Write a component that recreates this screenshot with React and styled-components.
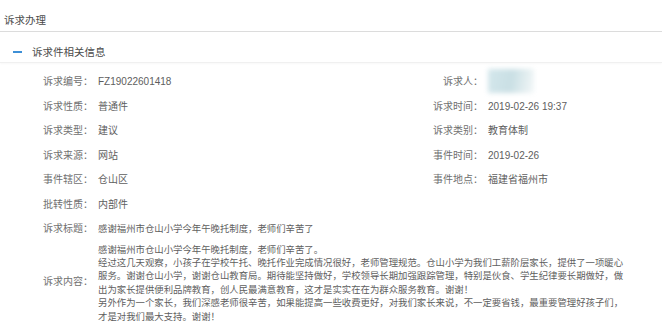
import React from 'react';
import styled, { createGlobalStyle } from 'styled-components';

const GlobalStyle = createGlobalStyle`
    body {
        margin: 0;
        background: #fff;
        font-family: "Liberation Sans", "Noto Sans CJK SC", sans-serif;
    }
`;

const fields = [
    { label: '诉求编号：', value: 'FZ19022601418', label2: '诉求人：', redacted: true },
    { label: '诉求性质：', value: '普通件', label2: '诉求时间：', value2: '2019-02-26 19:37' },
    { label: '诉求类型：', value: '建议', label2: '诉求类别：', value2: '教育体制' },
    { label: '诉求来源：', value: '网站', label2: '事件时间：', value2: '2019-02-26' },
    { label: '事件辖区：', value: '仓山区', label2: '事件地点：', value2: '福建省福州市' },
    { label: '批转性质：', value: '内部件', wide: true },
    { label: '诉求标题：', value: '感谢福州市仓山小学今年午晚托制度，老师们辛苦了', wide: true, small: true }
];

const contentLines = [
    '感谢福州市仓山小学今年午晚托制度，老师们辛苦了。',
    '经过这几天观察，小孩子在学校午托、晚托作业完成情况很好，老师管理规范。仓山小学为我们工薪阶层家长，提供了一项暖心',
    '服务。谢谢仓山小学，谢谢仓山教育局。期待能坚持做好，学校领导长期加强跟踪管理，特别是伙食、学生纪律要长期做好，做',
    '出为家长提供便利品牌教育，创人民最满意教育，这才是实实在在为群众服务教育。谢谢！',
    '另外作为一个家长，我们深感老师很辛苦，如果能提高一些收费更好，对我们家长来说，不一定要省钱，最重要管理好孩子们，',
    '才是对我们最大支持。谢谢！'
];

export default function App() {
    return <Page>
        <GlobalStyle />
        <PageTitle>诉求办理</PageTitle>
        <SectionHeader>
            <Dash />
            <span>诉求件相关信息</span>
        </SectionHeader>
        <InfoGrid>
            {fields.map((f, idx) => <React.Fragment key={idx}>
                <Label>{f.label}</Label>
                <Value $wide={f.wide} $small={f.small}>{f.value}</Value>
                {!f.wide && <Label>{f.label2}</Label>}
                {!f.wide && <Value>{f.redacted ? <Redacted /> : f.value2}</Value>}
            </React.Fragment>)}
            <Label $center>诉求内容：</Label>
            <Content>
                {contentLines.map((line, idx) => <Line key={idx}>{line}</Line>)}
            </Content>
        </InfoGrid>
    </Page>;
}

const Page = styled.div`
    width: 662px;
    height: 329px;
    overflow: hidden;
    background: #fff;
`;

const PageTitle = styled.div`
    height: 32px;
    line-height: 41px;
    padding-left: 4px;
    font-size: 10.5px;
    color: #4a4a4a;
    border-bottom: 1px solid #dcdcdc;
    box-sizing: border-box;
`;

const SectionHeader = styled.div`
    display: flex;
    align-items: center;
    gap: 10px;
    height: 31px;
    padding: 9px 0 0 13px;
    box-sizing: border-box;
    font-size: 10.5px;
    color: #4a4a4a;
    border-bottom: 1px solid #f0f0f0;
    box-shadow: 0 1px 2px rgba(0, 0, 0, 0.03);
`;

const Dash = styled.span`
    display: inline-block;
    width: 9px;
    height: 2px;
    background: #3d8fd6;
`;

const InfoGrid = styled.div`
    display: grid;
    grid-template-columns: 93px 290px 90px 1fr;
    column-gap: 5px;
    padding-top: 7px;
`;

const Label = styled.div`
    text-align: right;
    font-size: 10px;
    line-height: 24.5px;
    color: #707070;
    white-space: nowrap;
    ${props => props.$center ? 'align-self: center;' : ''}
`;

const Value = styled.div`
    font-size: ${props => props.$small ? '9.4px' : '10px'};
    line-height: 24.5px;
    color: #5e5e5e;
    white-space: nowrap;
    ${props => props.$wide ? 'grid-column: 2 / 5;' : ''}
`;

const Redacted = styled.span`
    display: inline-block;
    width: 46px;
    height: 24px;
    vertical-align: middle;
    margin-top: -2px;
    background: linear-gradient(100deg, #d4e7ec 0%, #c9dfe4 50%, #e3eef0 80%, #f4f8f9 100%);
    filter: blur(2.5px);
`;

const Content = styled.div`
    grid-column: 2 / 5;
    padding: 1px 0 0;
    font-size: 9.4px;
    line-height: 13.4px;
    color: #5e5e5e;
`;

const Line = styled.div`
    white-space: nowrap;
`;
